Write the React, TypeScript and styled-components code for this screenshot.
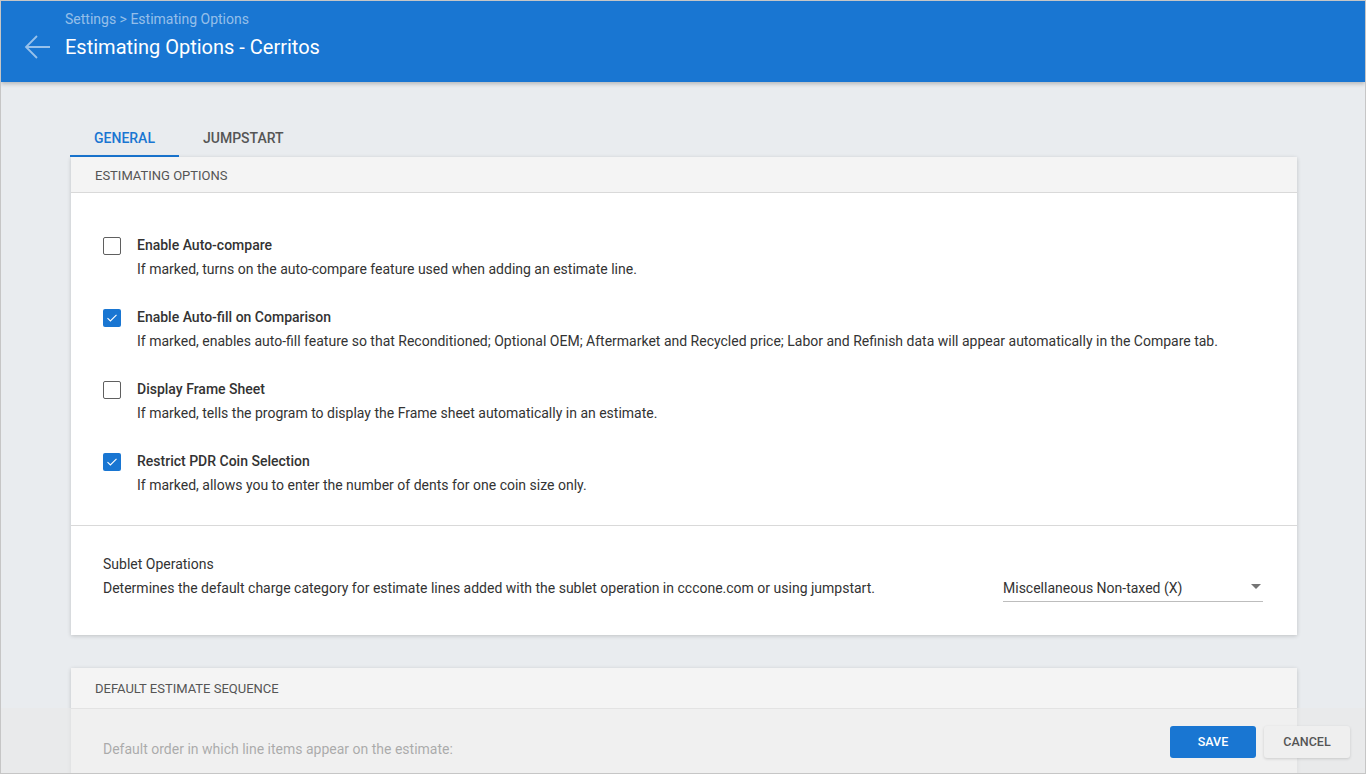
import React from 'react';
import styled, { createGlobalStyle } from 'styled-components';

const GlobalStyle = createGlobalStyle`
  html, body {
    margin: 0;
    padding: 0;
    font-family: Roboto, "Liberation Sans", Arial, sans-serif;
    background: #fff;
  }
  * { box-sizing: border-box; }
`;

interface OptionItem {
  title: string;
  description: string;
  checked: boolean;
}

const options: OptionItem[] = [
  {
    title: 'Enable Auto-compare',
    description: 'If marked, turns on the auto-compare feature used when adding an estimate line.',
    checked: false,
  },
  {
    title: 'Enable Auto-fill on Comparison',
    description:
      'If marked, enables auto-fill feature so that Reconditioned; Optional OEM; Aftermarket and Recycled price; Labor and Refinish data will appear automatically in the Compare tab.',
    checked: true,
  },
  {
    title: 'Display Frame Sheet',
    description: 'If marked, tells the program to display the Frame sheet automatically in an estimate.',
    checked: false,
  },
  {
    title: 'Restrict PDR Coin Selection',
    description: 'If marked, allows you to enter the number of dents for one coin size only.',
    checked: true,
  },
];

const Checkbox: React.FC<{ checked: boolean }> = ({ checked }) => (
  <Box $checked={checked}>
    {checked && (
      <svg width="12" height="10" viewBox="0 0 12 10">
        <path d="M1.5 5.2 L4.4 8 L10.5 1.8" fill="none" stroke="#fff" strokeWidth="1.1" />
      </svg>
    )}
  </Box>
);

const App: React.FC = () => {
  return (
    <Frame>
      <GlobalStyle />
      <Header>
        <BackButton>
          <svg width="28" height="28" viewBox="0 0 28 28">
            <path d="M27 14 H3 M14 3 L3 14 L14 25" fill="none" stroke="rgba(255,255,255,0.55)" strokeWidth="1.8" />
          </svg>
        </BackButton>
        <HeaderText>
          <Breadcrumb>Settings &gt; Estimating Options</Breadcrumb>
          <PageTitle>Estimating Options - Cerritos</PageTitle>
        </HeaderText>
      </Header>

      <Main>
        <Tabs>
          <Tab $active>General</Tab>
          <Tab>Jumpstart</Tab>
        </Tabs>

        <Card>
          <CardHeader>Estimating Options</CardHeader>
          <OptionList>
            {options.map((o) => (
              <OptionRow key={o.title}>
                <Checkbox checked={o.checked} />
                <OptionText>
                  <OptionTitle>{o.title}</OptionTitle>
                  <OptionDesc>{o.description}</OptionDesc>
                </OptionText>
              </OptionRow>
            ))}
          </OptionList>
          <SubletSection>
            <SubletText>
              <SubletTitle>Sublet Operations</SubletTitle>
              <OptionDesc>
                Determines the default charge category for estimate lines added with the sublet operation in cccone.com or using jumpstart.
              </OptionDesc>
            </SubletText>
            <Select>
              <span>Miscellaneous Non-taxed (X)</span>
              <Caret />
            </Select>
          </SubletSection>
        </Card>

        <Card>
          <CardHeader $tall>Default Estimate Sequence</CardHeader>
          <SequenceBody>Default order in which line items appear on the estimate:</SequenceBody>
        </Card>
      </Main>

      <ActionBar>
        <SaveButton>Save</SaveButton>
        <CancelButton>Cancel</CancelButton>
      </ActionBar>
    </Frame>
  );
};

const Frame = styled.div`
  position: relative;
  width: 1366px;
  height: 774px;
  overflow: hidden;
  background: #e9ecef;
  border: 1px solid #c6c6c6;
`;

const Header = styled.header`
  height: 81px;
  background: #1976d2;
  display: flex;
  align-items: center;
  padding: 0 0 0 22px;
  box-shadow: 0 2px 4px rgba(0, 0, 0, 0.22);
  position: relative;
  z-index: 2;
`;

const BackButton = styled.div`
  width: 28px;
  height: 28px;
  display: flex;
  margin-top: 11px;
`;

const HeaderText = styled.div`
  display: flex;
  flex-direction: column;
  margin-left: 14px;
  margin-top: -13px;
`;

const Breadcrumb = styled.div`
  font-size: 14px;
  line-height: 18px;
  color: rgba(255, 255, 255, 0.55);
`;

const PageTitle = styled.div`
  font-size: 20px;
  line-height: 26px;
  margin-top: 6px;
  color: #fff;
`;

const Main = styled.main`
  padding: 28px 69px 0 69px;
  display: flex;
  flex-direction: column;
  gap: 33px;
`;

const Tabs = styled.div`
  display: flex;
  height: 47px;
  margin-bottom: -33px;
`;

const Tab = styled.div<{ $active?: boolean }>`
  padding: 10px 24px 0;
  display: flex;
  align-items: center;
  justify-content: center;
  font-size: 14px;
  font-weight: 500;
  text-transform: uppercase;
  color: ${(p) => (p.$active ? '#1976d2' : '#555')};
  border-bottom: 2px solid ${(p) => (p.$active ? '#1976d2' : 'transparent')};
`;

const Card = styled.section`
  background: #fff;
  margin-left: 1px;
  width: 1226px;
  box-shadow: 0 1px 4px rgba(0, 0, 0, 0.18);
`;

const CardHeader = styled.div<{ $tall?: boolean }>`
  height: ${(p) => (p.$tall ? '41px' : '36px')};
  background: #f4f4f4;
  border-bottom: 1px solid #d9d9d9;
  display: flex;
  align-items: center;
  padding: ${(p) => (p.$tall ? '0 24px' : '2px 24px 0')};
  font-size: 13px;
  text-transform: uppercase;
  color: #555;
`;

const OptionList = styled.div`
  display: flex;
  flex-direction: column;
  gap: 28px;
  padding: 42px 32px 30px;
  border-bottom: 1px solid #d9d9d9;
`;

const OptionRow = styled.div`
  display: flex;
  align-items: flex-start;
  gap: 16px;
`;

const Box = styled.div<{ $checked: boolean }>`
  width: 18px;
  height: 18px;
  margin-top: 2px;
  border-radius: 2px;
  flex-shrink: 0;
  display: flex;
  align-items: center;
  justify-content: center;
  background: ${(p) => (p.$checked ? '#1976d2' : '#fff')};
  border: ${(p) => (p.$checked ? 'none' : '1.5px solid #5f5f5f')};
`;

const OptionText = styled.div`
  display: flex;
  flex-direction: column;
  gap: 4px;
`;

const OptionTitle = styled.div`
  font-size: 14px;
  line-height: 20px;
  font-weight: 500;
  color: #333;
`;

const OptionDesc = styled.div`
  font-size: 14px;
  line-height: 20px;
  color: #333;
`;

const SubletSection = styled.div`
  display: flex;
  align-items: flex-end;
  justify-content: space-between;
  padding: 28px 34px 37px 32px;
`;

const SubletText = styled.div`
  display: flex;
  flex-direction: column;
  gap: 4px;
`;

const SubletTitle = styled.div`
  font-size: 14px;
  line-height: 20px;
  color: #333;
`;

const Select = styled.div`
  width: 260px;
  height: 30px;
  display: flex;
  align-items: flex-end;
  justify-content: space-between;
  border-bottom: 1px solid #bdbdbd;
  font-size: 14px;
  line-height: 20px;
  color: #333;
  padding-bottom: 3px;
  margin-bottom: -4px;
`;

const Caret = styled.span`
  width: 0;
  height: 0;
  border-left: 5px solid transparent;
  border-right: 5px solid transparent;
  border-top: 5px solid #757575;
  margin: 0 2px 9px 0;
`;

const SequenceBody = styled.div`
  padding: 30px 32px 40px;
  font-size: 14px;
  line-height: 20px;
  color: #333;
`;

const ActionBar = styled.div`
  position: absolute;
  left: 0;
  right: 0;
  bottom: 0;
  height: 65px;
  background: rgba(232, 232, 232, 0.66);
  display: flex;
  align-items: center;
  justify-content: flex-end;
  gap: 8px;
  padding: 2px 15px 0 0;
  z-index: 3;
`;

const BaseButton = styled.button`
  width: 86px;
  height: 32px;
  border-radius: 3px;
  border: none;
  font-family: Roboto, "Liberation Sans", Arial, sans-serif;
  font-size: 12.5px;
  font-weight: 500;
  text-transform: uppercase;
  cursor: pointer;
`;

const SaveButton = styled(BaseButton)`
  background: #1976d2;
  color: #fff;
`;

const CancelButton = styled(BaseButton)`
  background: #efefef;
  color: #555;
  box-shadow: 0 1px 3px rgba(0, 0, 0, 0.15);
`;

export default App;
